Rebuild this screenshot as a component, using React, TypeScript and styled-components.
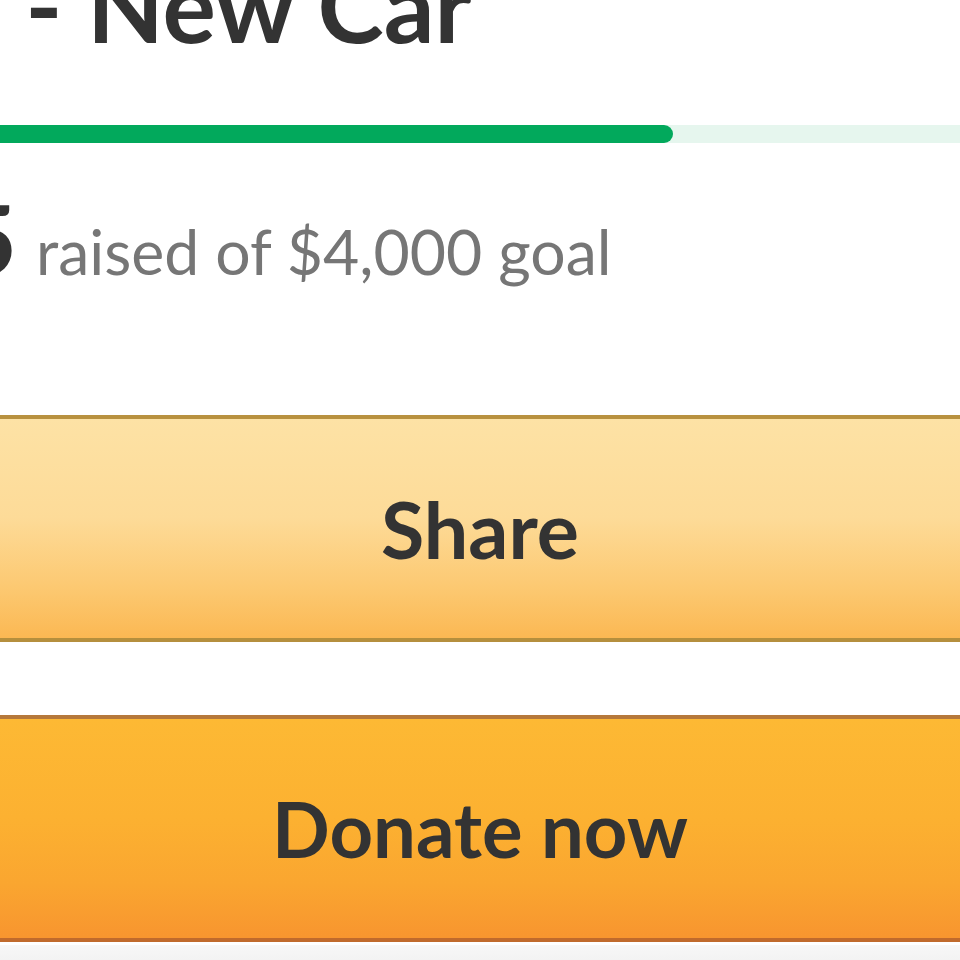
import React from "react";
import styled, { createGlobalStyle } from "styled-components";

const Global = createGlobalStyle`
  html, body { margin: 0; padding: 0; background: #ffffff; overflow: hidden; }
  * { box-sizing: border-box; }
`;

const OFFSET = 300;

const Page = styled.div`
  width: 960px;
  height: 960px;
  overflow: hidden;
  background: #ffffff;
  font-family: Lato, "Open Sans", sans-serif;
`;

const Card = styled.div<{ $offset: number }>`
  margin-left: ${(p) => -p.$offset}px;
  width: ${(p) => 960 + p.$offset * 2}px;
`;

const Title = styled.h1`
  margin: -46px 0 0 0;
  padding-left: 69px;
  font-size: 100px;
  line-height: 100px;
  font-weight: 700;
  color: #333333;
  white-space: nowrap;
`;

const Track = styled.div`
  margin-top: 71px;
  height: 18px;
  background: #e6f6ee;
`;

const Fill = styled.div`
  height: 100%;
  background: #02a95c;
  border-radius: 0 9px 9px 0;
`;

const Stats = styled.div`
  margin-top: 47px;
  padding-left: 16px;
  display: flex;
  align-items: baseline;
  gap: 19px;
  white-space: nowrap;
`;

const Raised = styled.span`
  font-size: 96px;
  line-height: 96px;
  font-weight: 700;
  color: #333333;
`;

const Goal = styled.span`
  font-size: 62.5px;
  line-height: 62px;
  font-weight: 400;
  color: #767676;
`;

const Button = styled.button<{ $variant: "share" | "donate" }>`
  display: flex;
  align-items: center;
  justify-content: center;
  width: 100%;
  height: 227px;
  border: 4px solid
    ${(p) => (p.$variant === "share" ? "#b8913f" : "#b5783a")};
  border-bottom-color: ${(p) => (p.$variant === "share" ? "#b58f3d" : "#c06a2c")};
  background: ${(p) =>
    p.$variant === "share"
      ? "linear-gradient(to bottom, #fde2a5 0%, #fddb98 45%, #fcc870 78%, #fbb853 100%)"
      : "linear-gradient(to bottom, #fdb934 0%, #fcb131 45%, #faa630 75%, #f8952f 100%)"};
  font-family: Lato, "Open Sans", sans-serif;
  font-size: ${(p) => (p.$variant === "share" ? "79px" : "76px")};
  font-weight: 700;
  color: #333333;
  padding: 0;
  margin-top: ${(p) => (p.$variant === "share" ? "129px" : "73px")};
  cursor: pointer;
`;

const FooterStrip = styled.div`
  margin-top: 3px;
  height: 40px;
  background: linear-gradient(to bottom, #f7f7f7, #ececec);
`;

export default function App() {
  const raised = 2495;
  const goal = 4000;
  const pct = (raised / goal) * 100;
  return (
    <>
      <Global />
      <Page>
        <Card $offset={OFFSET}>
          <Title>2023 - New Car</Title>
          <Track>
            <Fill style={{ width: `${pct}%` }} />
          </Track>
          <Stats>
            <Raised>${raised.toLocaleString("en-US")}</Raised>
            <Goal>raised of ${goal.toLocaleString("en-US")} goal</Goal>
          </Stats>
          <Button $variant="share">Share</Button>
          <Button $variant="donate">Donate now</Button>
          <FooterStrip />
        </Card>
      </Page>
    </>
  );
}
